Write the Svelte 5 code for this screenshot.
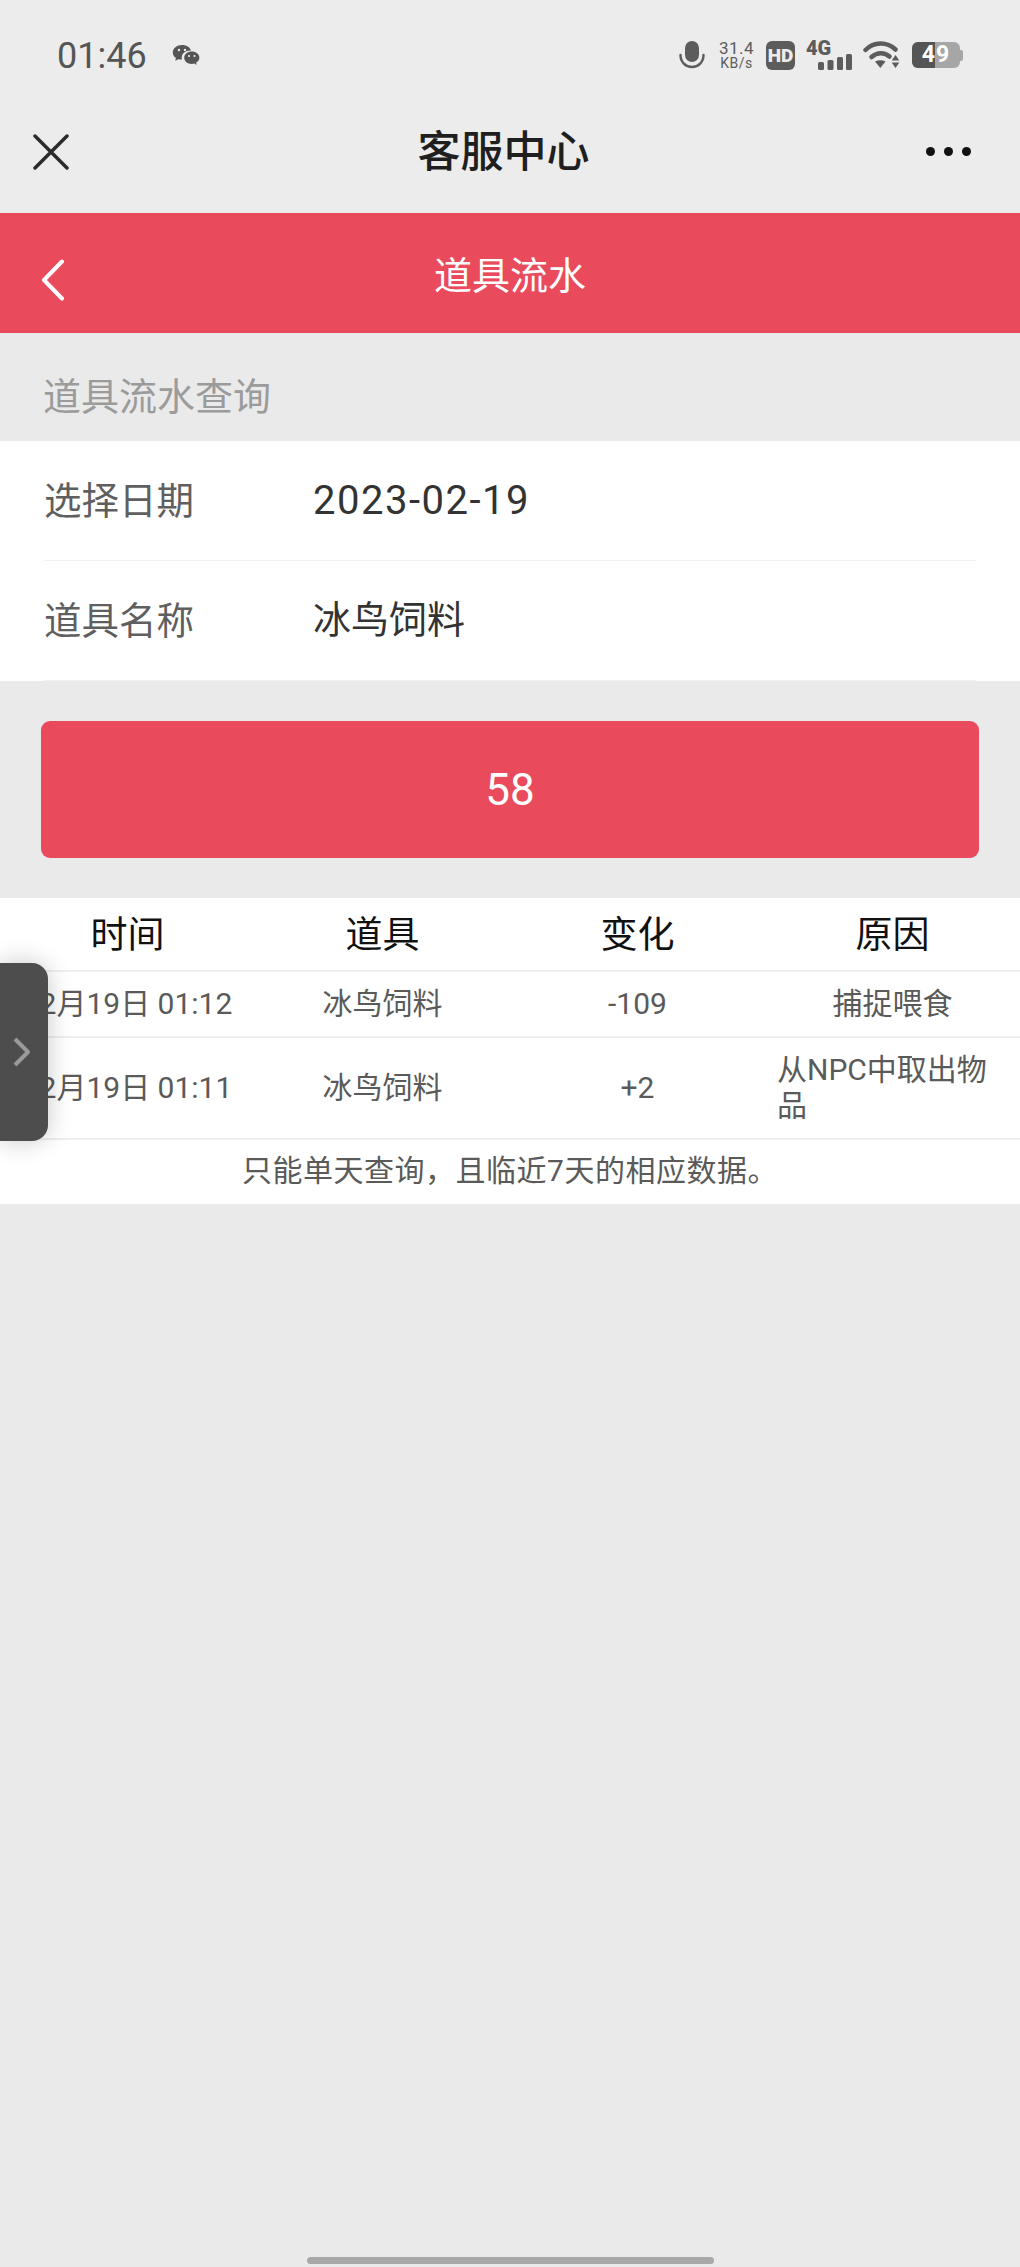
<script>
  const form = [
    { label: '选择日期', value: '2023-02-19', latin: true },
    { label: '道具名称', value: '冰鸟饲料', latin: false }
  ];
  const columns = ['时间', '道具', '变化', '原因'];
  const rows = [
    ['02月19日 01:12', '冰鸟饲料', '-109', '捕捉喂食'],
    ['02月19日 01:11', '冰鸟饲料', '+2', '从NPC中取出物品']
  ];
</script>

<div class="page">
  <div class="status">
    <div class="status-left">
      <span class="time">01:46</span>
      <svg class="wechat" width="28" height="24" viewBox="0 0 28 24">
        <path d="M10 1C4.800 1 .8 4.300 .8 8.400c0 2.300 1.200 4.300 3.200 5.700l-.8 2.700 3.100-1.600c1 .3 2 .4 3 .4h.7a7 7 0 0 1-.3-2c0-4.100 3.900-7.200 8.600-7.200h.7C17.900 3.200 14.300 1 10 1z" fill="#555" />
        <path d="M27.400 13.700c0-3.500-3.500-6.200-7.600-6.200-4.300 0-7.600 2.700-7.600 6.200s3.300 6.200 7.600 6.200c.9 0 1.700-.1 2.500-.4l2.500 1.400-.7-2.300c2.100-1.200 3.300-2.900 3.300-4.900z" fill="#555" />
        <circle cx="7" cy="6" r="1.200" fill="#ececec" />
        <circle cx="13" cy="6" r="1.200" fill="#ececec" />
        <circle cx="17" cy="12" r="1.100" fill="#ececec" />
        <circle cx="22.500" cy="12" r="1.100" fill="#ececec" />
      </svg>
    </div>
    <div class="status-right">
      <svg width="26" height="29" viewBox="0 0 26 29">
        <rect x="6" y="0" width="14" height="21" rx="7" fill="#5c5c5c" />
        <path d="M1.500 14c0 7 5 12 11.500 12s11.500-5 11.500-12" fill="none" stroke="#5c5c5c" stroke-width="2.400" stroke-linecap="round" />
      </svg>
      <div class="speed"><span>31.4</span><span class="unit">KB/s</span></div>
      <div class="hd">HD</div>
      <div class="signal">
        <span class="net">4G</span>
        <svg width="34" height="16" viewBox="0 0 34 16">
          <rect x="0" y="8" width="6" height="8" rx="1.500" fill="#5c5c5c" />
          <rect x="9.500" y="6" width="6" height="10" rx="1.500" fill="#5c5c5c" />
          <rect x="19" y="3" width="6" height="13" rx="1.500" fill="#5c5c5c" />
          <rect x="28" y="0" width="6" height="16" rx="1.500" fill="#5c5c5c" />
        </svg>
      </div>
      <svg class="wifi" width="37" height="28" viewBox="0 0 37 28">
        <path d="M2.500 9C11 .5 24 .5 32.500 8.500" fill="none" stroke="#5c5c5c" stroke-width="4.500" stroke-linecap="round" />
        <path d="M8.500 16c5.500-5 13-5 18-.5" fill="none" stroke="#5c5c5c" stroke-width="4.500" stroke-linecap="round" />
        <path d="M12 20.500q5.500-2.500 10.500 0L17.300 27z" fill="#5c5c5c" />
        <path d="M32.500 14l3.800 5.500h-7.600zM28.700 21.500h7.600l-3.800 5.500z" fill="#5c5c5c" />
      </svg>
      <div class="battery">
        <div class="battery-body"><span class="charge"></span><span class="level">49</span></div>
        <span class="cap"></span>
      </div>
    </div>
  </div>

  <div class="nav">
    <svg class="close" width="36" height="36" viewBox="0 0 36 36">
      <path d="M2 2l32 32M34 2L2 34" stroke="#2b2b2b" stroke-width="3.500" stroke-linecap="round" />
    </svg>
    <div class="nav-title">客服中心</div>
    <div class="dots"><i></i><i></i><i></i></div>
  </div>

  <div class="header">
    <svg class="back" width="24" height="42" viewBox="0 0 24 42">
      <path d="M21 2.500L3 21l18 18.500" fill="none" stroke="#fff" stroke-width="4" stroke-linecap="round" stroke-linejoin="round" />
    </svg>
    <div class="header-title">道具流水</div>
  </div>

  <div class="section-title">道具流水查询</div>

  <div class="form">
    {#each form as item}
      <div class="form-row">
        <span class="form-label">{item.label}</span>
        <span class="form-value" class:latin={item.latin}>{item.value}</span>
      </div>
    {/each}
  </div>

  <div class="button-wrap">
    <div class="button">58</div>
  </div>

  <div class="table">
    <div class="thead">
      {#each columns as col}
        <div class="th">{col}</div>
      {/each}
    </div>
    {#each rows as row}
      <div class="tr">
        {#each row as cell}
          <div class="td"><span>{cell}</span></div>
        {/each}
      </div>
    {/each}
    <div class="note">只能单天查询，且临近7天的相应数据。</div>

    <div class="side-tab">
      <svg width="20" height="32" viewBox="0 0 20 32">
        <path d="M3 3l13 13L3 29" fill="none" stroke="#9a9a9a" stroke-width="4" stroke-linejoin="round" />
      </svg>
    </div>
  </div>

  <div class="home-bar"></div>
</div>

<style>
  :global(body) {
    margin: 0;
    background: #eaeaea;
  }

  .page {
    display: flex;
    flex-direction: column;
    height: 2267px;
    overflow: hidden;
    background: #eaeaea;
    font-family: Roboto, "Noto Sans CJK SC", sans-serif;
    color: #555;
  }

  .status {
    display: flex;
    align-items: center;
    justify-content: space-between;
    height: 110px;
    padding: 0 57px 0 57px;
    box-sizing: border-box;
    background: #ececec;
  }

  .status-left {
    display: flex;
    align-items: center;
    gap: 25px;
  }

  .time {
    margin-top: 2px;
    font-size: 36px;
    line-height: 40px;
    color: #555;
  }

  .wechat {
    margin-top: 2px;
  }

  .status-right {
    display: flex;
    align-items: center;
    color: #5c5c5c;
  }

  .speed {
    display: flex;
    flex-direction: column;
    align-items: center;
    width: 37px;
    margin-left: 13px;
    font-size: 17px;
    letter-spacing: 0.500px;
    line-height: 15px;
  }

  .unit {
    font-size: 14px;
    line-height: 14px;
  }

  .hd {
    width: 29px;
    height: 29px;
    margin-left: 11px;
    border-radius: 6px;
    background: #5c5c5c;
    color: #ececec;
    font-size: 19px;
    font-weight: 900;
    line-height: 29px;
    text-align: center;
  }

  .signal {
    display: flex;
    flex-direction: column;
    align-items: flex-start;
    width: 46px;
    height: 29px;
    margin-left: 11px;
  }

  .net {
    font-size: 20px;
    font-weight: 900;
    line-height: 15px;
  }

  .signal svg {
    margin: -2px 0 0 12px;
  }

  .wifi {
    margin-left: 11px;
  }

  .battery {
    display: flex;
    align-items: center;
    margin-left: 12px;
  }

  .battery-body {
    position: relative;
    display: flex;
    align-items: center;
    justify-content: center;
    width: 48px;
    height: 26px;
    overflow: hidden;
    border-radius: 6px;
    background: #a6a6a6;
  }

  .charge {
    position: absolute;
    left: 0;
    top: 0;
    bottom: 0;
    width: 23px;
    background: #555;
  }

  .level {
    position: relative;
    color: #fff;
    font-size: 23px;
    font-weight: 700;
    letter-spacing: 1px;
    line-height: 26px;
  }

  .cap {
    width: 3px;
    height: 11px;
    border-radius: 0 2px 2px 0;
    background: #a6a6a6;
  }

  .nav {
    display: flex;
    align-items: center;
    justify-content: space-between;
    height: 103px;
    padding: 0 49px 20px 33px;
    box-sizing: border-box;
    background: #ececec;
  }

  .nav-title {
    color: #1f1f1f;
    font-size: 43px;
    font-weight: 500;
    line-height: 60px;
    margin-left: 12px;
  }

  .dots {
    display: flex;
    gap: 9px;
  }

  .dots i {
    width: 9px;
    height: 9px;
    border-radius: 50%;
    background: #111;
  }

  .header {
    position: relative;
    display: flex;
    align-items: center;
    justify-content: center;
    height: 120px;
    padding-top: 5px;
    box-sizing: border-box;
    background: #e94b5d;
  }

  .back {
    position: absolute;
    left: 41px;
    top: 46px;
  }

  .header-title {
    color: #fff;
    font-size: 38px;
    line-height: 50px;
  }

  .section-title {
    display: flex;
    align-items: center;
    height: 108px;
    padding: 12px 43px 0;
    box-sizing: border-box;
    color: #9b9b9b;
    font-size: 38px;
  }

  .form {
    padding: 0 0 0 44px;
    background: #fff;
  }

  .form-row {
    display: flex;
    align-items: center;
    height: 119px;
    margin-right: 44px;
    border-bottom: 1px solid #f1f1f1;
  }

  .form-label {
    width: 269px;
    margin-bottom: 6px;
    color: #5f5f5f;
    font-size: 37.500px;
  }

  .form-value {
    margin-bottom: 8px;
    color: #333;
    font-size: 38px;
  }

  .form-value.latin {
    margin-bottom: 0;
    font-size: 40px;
    letter-spacing: 1.500px;
  }

  .button-wrap {
    padding: 40px 41px;
  }

  .button {
    display: flex;
    align-items: center;
    justify-content: center;
    height: 137px;
    border-radius: 9px;
    background: #e94b5d;
    color: #fff;
    font-size: 44px;
  }

  .table {
    position: relative;
    background: #fff;
  }

  .thead {
    display: grid;
    grid-template-columns: repeat(4, 1fr);
    height: 74px;
    box-sizing: border-box;
    border-bottom: 2px solid #eee;
  }

  .th {
    display: flex;
    align-items: center;
    justify-content: center;
    padding-bottom: 5px;
    color: #111;
    font-size: 37px;
  }

  .tr {
    display: grid;
    grid-template-columns: repeat(4, 1fr);
    border-bottom: 2px solid #eee;
  }

  .td {
    display: flex;
    align-items: center;
    justify-content: center;
    padding: 14px 12px;
    color: #5a5a5a;
    font-size: 30px;
    line-height: 36px;
  }

  .td:first-child {
    padding: 14px 0;
    white-space: nowrap;
  }

  .note {
    height: 64px;
    color: #5a5a5a;
    font-size: 30px;
    letter-spacing: 0.500px;
    line-height: 62px;
    text-align: center;
  }

  .side-tab {
    position: absolute;
    left: 0;
    top: 65px;
    display: flex;
    align-items: center;
    width: 48px;
    height: 178px;
    padding-left: 12px;
    box-sizing: border-box;
    border-radius: 0 16px 16px 0;
    background: #4d4d4d;
    box-shadow: 0 0 24px rgba(0, 0, 0, 0.22);
  }

  .home-bar {
    align-self: center;
    width: 407px;
    height: 7px;
    margin-top: auto;
    margin-bottom: 3px;
    border-radius: 4px;
    background: #a8a8a8;
  }
</style>
